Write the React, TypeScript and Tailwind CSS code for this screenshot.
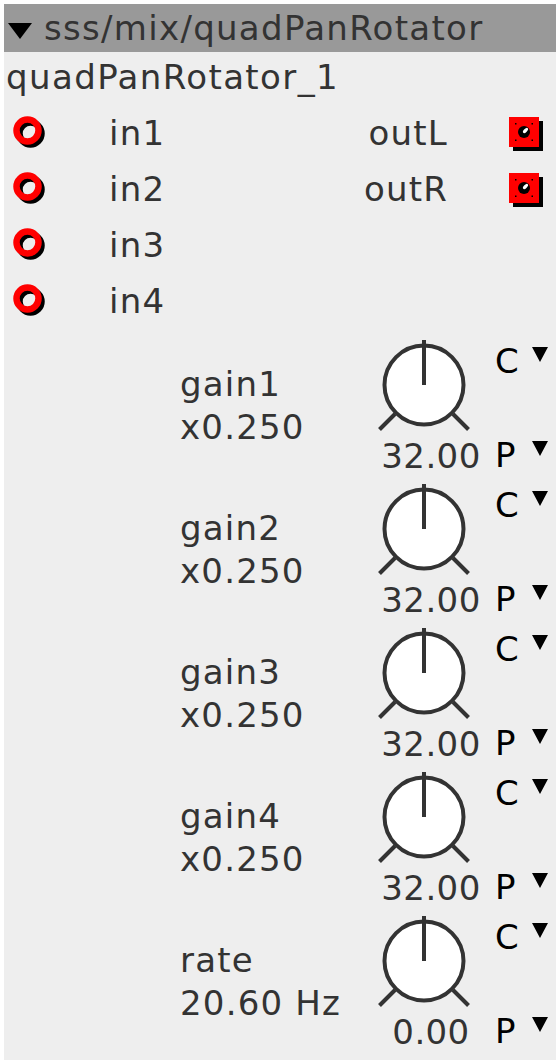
import React from 'react';

// data
const inputs = ['in1', 'in2', 'in3', 'in4'];
const outputs = ['outL', 'outR'];
const controls = [
  { name: 'gain1', display: 'x0.250', value: '32.00' },
  { name: 'gain2', display: 'x0.250', value: '32.00' },
  { name: 'gain3', display: 'x0.250', value: '32.00' },
  { name: 'gain4', display: 'x0.250', value: '32.00' },
  { name: 'rate', display: '20.60 Hz', value: '0.00' },
];

const font = { fontFamily: '"DejaVu Sans", Verdana, sans-serif' };

const InPort = (): JSX.Element => (
  <svg width="36" height="36" viewBox="0 0 36 36">
    <circle cx="17.5" cy="17.5" r="11" fill="none" stroke="#000" strokeWidth="6.5" />
    <circle cx="14.5" cy="14.5" r="11" fill="none" stroke="#ff0000" strokeWidth="6.5" />
  </svg>
);

const OutPort = (): JSX.Element => (
  <svg width="36" height="36" viewBox="0 0 36 36">
    <rect x="4" y="4" width="30" height="30" fill="#000" />
    <rect x="0" y="0" width="30" height="30" fill="#ff0000" />
    {/* corner dots */}
    <g fill="#000">
      <rect x="6" y="6" width="1.5" height="1.5" />
      <rect x="22.5" y="6" width="1.5" height="1.5" />
      <rect x="6" y="22.5" width="1.5" height="1.5" />
      <rect x="22.5" y="22.5" width="1.5" height="1.5" />
    </g>
    <circle cx="15" cy="15" r="6" fill="#000" />
    <ellipse cx="16.5" cy="13.5" rx="3.2" ry="1.6" transform="rotate(-45 16.5 13.5)" fill="#fff" />
  </svg>
);

const Knob = (): JSX.Element => (
  <svg width="100" height="100" viewBox="0 0 100 100">
    <line x1="21" y1="79" x2="5.5" y2="94.5" stroke="#333" strokeWidth="4" />
    <line x1="79" y1="79" x2="94.5" y2="94.5" stroke="#333" strokeWidth="4" />
    <circle cx="50" cy="50" r="39.5" fill="#fff" stroke="#333" strokeWidth="4" />
    <line x1="50" y1="50" x2="50" y2="5" stroke="#333" strokeWidth="4" />
  </svg>
);

const Tri = ({ w, h }: { w: number; h: number }): JSX.Element => (
  <svg width={w} height={h} viewBox={`0 0 ${w} ${h}`}>
    <polygon points={`0,0 ${w},0 ${w / 2},${h}`} fill="#000" />
  </svg>
);

const App = (): JSX.Element => {
  return (
    <div className="w-[560px] h-[1064px] bg-white p-[4px]" style={font}>
      <div className="w-[552px] h-[1056px] bg-[#eeeeee] flex flex-col text-[34px] text-[#333333] overflow-hidden">
        {/* title bar */}
        <div className="h-[48px] bg-[#999999] flex items-center shrink-0">
          <div className="ml-[4px] mt-[6px] w-[36px]">
            <Tri w={24} h={16} />
          </div>
          <span className="leading-[48px] whitespace-nowrap tracking-[1.3px]">sss/mix/quadPanRotator</span>
        </div>

        {/* instance name */}
        <div className="h-[53px] pl-[2px] pb-[3px] flex items-center shrink-0 leading-none tracking-[1.4px]">
          quadPanRotator_1
        </div>

        {/* ports */}
        {inputs.map((inp, i) => (
          <div key={inp} className="h-[56px] flex items-center shrink-0 tracking-[1.2px]">
            <div className="w-[105px] pl-[9px] pt-[2px]">
              <InPort />
            </div>
            <span className="w-[120px] leading-none">{inp}</span>
            <span className="w-[219px] text-right leading-none">{outputs[i] ?? ''}</span>
            <div className="ml-[61px] pt-[4px]">{outputs[i] ? <OutPort /> : null}</div>
          </div>
        ))}

        {/* controls */}
        {controls.map((c) => (
          <div key={c.name} className="h-[144px] flex shrink-0">
            <div className="w-[366px] pl-[176px] pt-[34px] flex flex-col leading-[43px] whitespace-nowrap tracking-[1.2px]">
              <span>{c.name}</span>
              <span>{c.display}</span>
            </div>
            <div className="w-[122px] flex flex-col">
              <div className="mt-[6px] ml-[4px]">
                <Knob />
              </div>
              <div className="h-[42px] leading-[42px] text-center tracking-[0.4px]">{c.value}</div>
            </div>
            <div className="flex flex-col pl-[3px] text-black">
              <div className="mt-[15px] h-[34px] flex items-start">
                <span className="leading-[34px]">C</span>
                <div className="ml-[13px] mt-[3px]">
                  <Tri w={16} h={15} />
                </div>
              </div>
              <div className="mt-[60px] h-[34px] flex items-start">
                <span className="leading-[34px]">P</span>
                <div className="ml-[16px] mt-[3px]">
                  <Tri w={16} h={15} />
                </div>
              </div>
            </div>
          </div>
        ))}
      </div>
    </div>
  );
};

export default App;
